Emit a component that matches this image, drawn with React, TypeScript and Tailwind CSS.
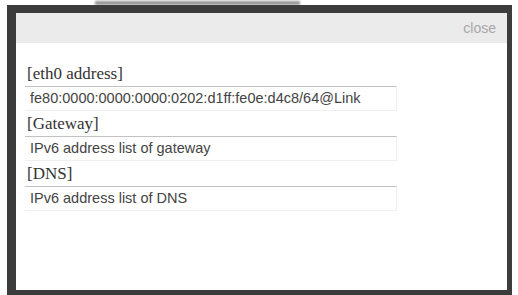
const fields = [
  { label: "[eth0 address]", value: "fe80:0000:0000:0000:0202:d1ff:fe0e:d4c8/64@Link" },
  { label: "[Gateway]", value: "IPv6 address list of gateway" },
  { label: "[DNS]", value: "IPv6 address list of DNS" },
];

export default function App() {
  return (
    <div className="relative w-[518px] h-[295px] bg-white overflow-hidden flex flex-col pt-[5px] pl-[7px] pr-[6px]">
      {/* illegible page text peeking out behind the dialog */}
      <div className="absolute top-[1px] left-[95px] w-[205px] h-[4px] bg-[#6a6a6a] blur-[1px] opacity-70" />

      <div className="relative flex-1 flex flex-col border-l-[9px] border-t-[8px] border-r-[5px] border-b-[5px] border-[#3c3c3c] bg-white">
        {/* Header */}
        <div className="h-[30px] bg-[#ebebeb] flex items-center justify-end pr-[11px]">
          <span className="text-[14px] text-[#a8a8a8] font-['Liberation_Sans',sans-serif] cursor-pointer">
            close
          </span>
        </div>

        {/* Body */}
        <div className="flex-1 pt-[18px] pl-[9px]">
          <div className="w-[372px] flex flex-col">
            {fields.map((f) => (
              <div key={f.label} className="flex flex-col">
                <div className="h-[25px] flex items-center pl-[2px] text-[17px] text-[#333] font-['Liberation_Serif',serif]">
                  {f.label}
                </div>
                <div className="h-[25px] flex items-center pl-[5px] border-t border-t-[#c2c2c2] border-b border-b-[#efefef] border-r border-r-[#eeeeee] text-[14.5px] text-[#444] font-['Liberation_Sans',sans-serif] whitespace-nowrap">
                  {f.value}
                </div>
              </div>
            ))}
          </div>
        </div>
      </div>
    </div>
  );
}
